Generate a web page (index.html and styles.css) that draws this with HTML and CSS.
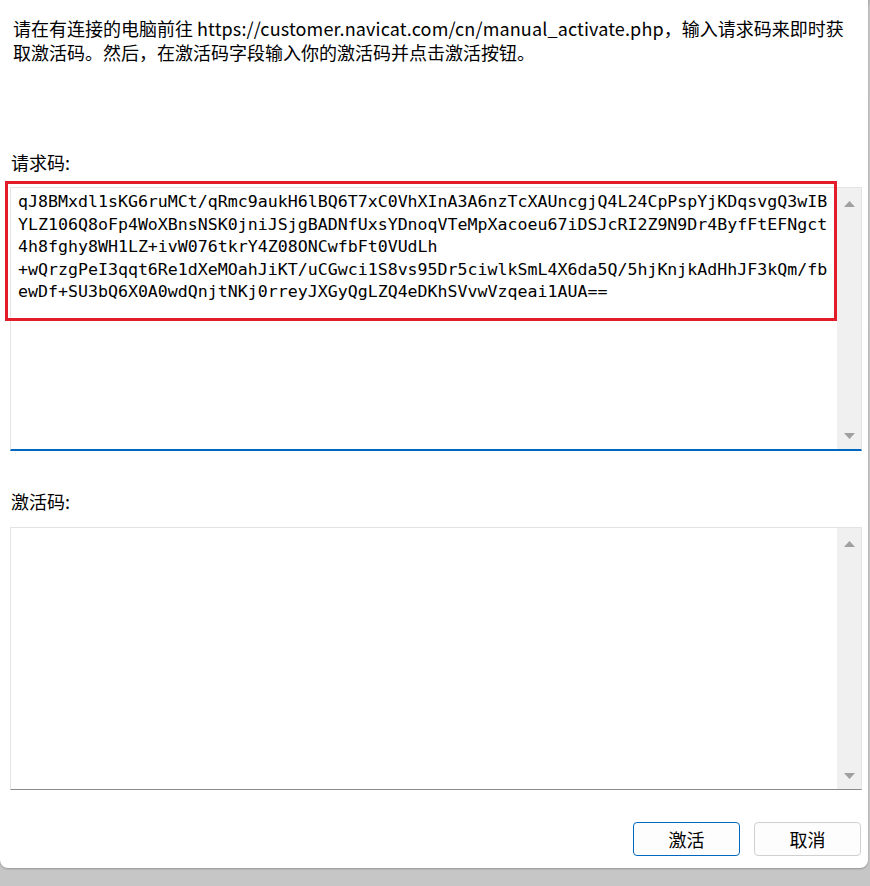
FILE: index.html
```html
<!DOCTYPE html>
<html lang="zh-CN">
<head>
<meta charset="utf-8">
<title>手动激活</title>
<link rel="stylesheet" href="styles.css">
</head>
<body>
<div class="window">
  <p class="intro">请在有连接的电脑前往 <span class="url">https://customer.navicat.com/cn/manual_activate.php</span>，输入请求码来即时获<br>取激活码。然后，在激活码字段输入你的激活码并点击激活按钮。</p>

  <div class="label label-request">请求码:</div>
  <div class="field field-request">
    <div class="content">qJ8BMxdl1sKG6ruMCt/qRmc9aukH6lBQ6T7xC0VhXInA3A6nzTcXAUncgjQ4L24CpPspYjKDqsvgQ3wIB
YLZ106Q8oFp4WoXBnsNSK0jniJSjgBADNfUxsYDnoqVTeMpXacoeu67iDSJcRI2Z9N9Dr4ByfFtEFNgct
4h8fghy8WH1LZ+ivW076tkrY4Z08ONCwfbFt0VUdLh
+wQrzgPeI3qqt6Re1dXeMOahJiKT/uCGwci1S8vs95Dr5ciwlkSmL4X6da5Q/5hjKnjkAdHhJF3kQm/fb
ewDf+SU3bQ6X0A0wdQnjtNKj0rreyJXGyQgLZQ4eDKhSVvwVzqeai1AUA==</div>
    <div class="scroll">
      <svg class="arrow" width="11" height="6" viewBox="0 0 11 6"><polygon points="0,6 5.5,0 11,6"/></svg>
      <svg class="arrow" width="11" height="6" viewBox="0 0 11 6"><polygon points="0,0 11,0 5.5,6"/></svg>
    </div>
  </div>

  <div class="label label-activate">激活码:</div>
  <div class="field field-activate">
    <div class="content"></div>
    <div class="scroll">
      <svg class="arrow" width="11" height="6" viewBox="0 0 11 6"><polygon points="0,6 5.5,0 11,6"/></svg>
      <svg class="arrow" width="11" height="6" viewBox="0 0 11 6"><polygon points="0,0 11,0 5.5,6"/></svg>
    </div>
  </div>

  <div class="actions">
    <button class="btn btn-primary">激活</button>
    <button class="btn">取消</button>
  </div>

  <div class="highlight"></div>
</div>
</body>
</html>
```

FILE: styles.css
```css
html, body {
  margin: 0;
  padding: 0;
}

body {
  width: 870px;
  height: 886px;
  background: linear-gradient(#b4b4b4, #c8c8c8 8px, #c6c6c6);
  overflow: hidden;
  font-family: "Noto Sans CJK SC", "Noto Sans", sans-serif;
  color: #000;
}

.window {
  position: relative;
  width: 868px;
  height: 868px;
  box-sizing: border-box;
  background: #fff;
  border-radius: 0 0 8px 8px;
  padding: 16px 6px 0 10px;
  display: flex;
  flex-direction: column;
  box-shadow: 0 1px 2px rgba(0, 0, 0, 0.25);
}

.intro {
  margin: 0 0 0 3px;
  font-size: 18px;
  line-height: 24px;
  white-space: nowrap;
}

.url {
  letter-spacing: 0.14px;
}

.label {
  margin-left: 1px;
  font-size: 18px;
  line-height: 24px;
}

.label-request {
  margin-top: 86px;
}

.label-activate {
  margin-top: 38px;
}

.field {
  display: flex;
  border: 1px solid #e3e3e3;
  background: #fff;
}

.field-request {
  margin-top: 13px;
  height: 264px;
  box-sizing: border-box;
  border-bottom: 2px solid #0067c0;
}

.field-activate {
  margin-top: 14px;
  height: 263px;
  box-sizing: border-box;
  border-bottom: 1px solid #8a8a8a;
}

.content {
  flex: 1;
  padding: 3px 0 0 7px;
  font-family: "DejaVu Sans Mono", "Liberation Mono", monospace;
  font-size: 16.6px;
  line-height: 22.5px;
  white-space: pre;
  overflow: hidden;
}

.scroll {
  width: 24px;
  background: #f0f0f0;
  display: flex;
  flex-direction: column;
  justify-content: space-between;
  align-items: center;
  padding: 13px 0 10px;
  box-sizing: border-box;
}

.arrow {
  display: block;
  fill: #a0a0a0;
}

.actions {
  margin-top: 32px;
  margin-right: 1px;
  display: flex;
  justify-content: flex-end;
  gap: 14px;
}

.btn {
  width: 107px;
  height: 34px;
  box-sizing: border-box;
  border: 1px solid #d0d0d0;
  border-radius: 4px;
  background: #fdfdfd;
  font-family: "Noto Sans CJK SC", "Noto Sans", sans-serif;
  font-size: 18px;
  line-height: 24px;
  color: #000;
  padding: 0;
}

.btn-primary {
  border-color: #0067c0;
}

.highlight {
  position: absolute;
  left: 5px;
  top: 181px;
  width: 832px;
  height: 140px;
  box-sizing: border-box;
  border: 3px solid #e31c2a;
  pointer-events: none;
}
```
